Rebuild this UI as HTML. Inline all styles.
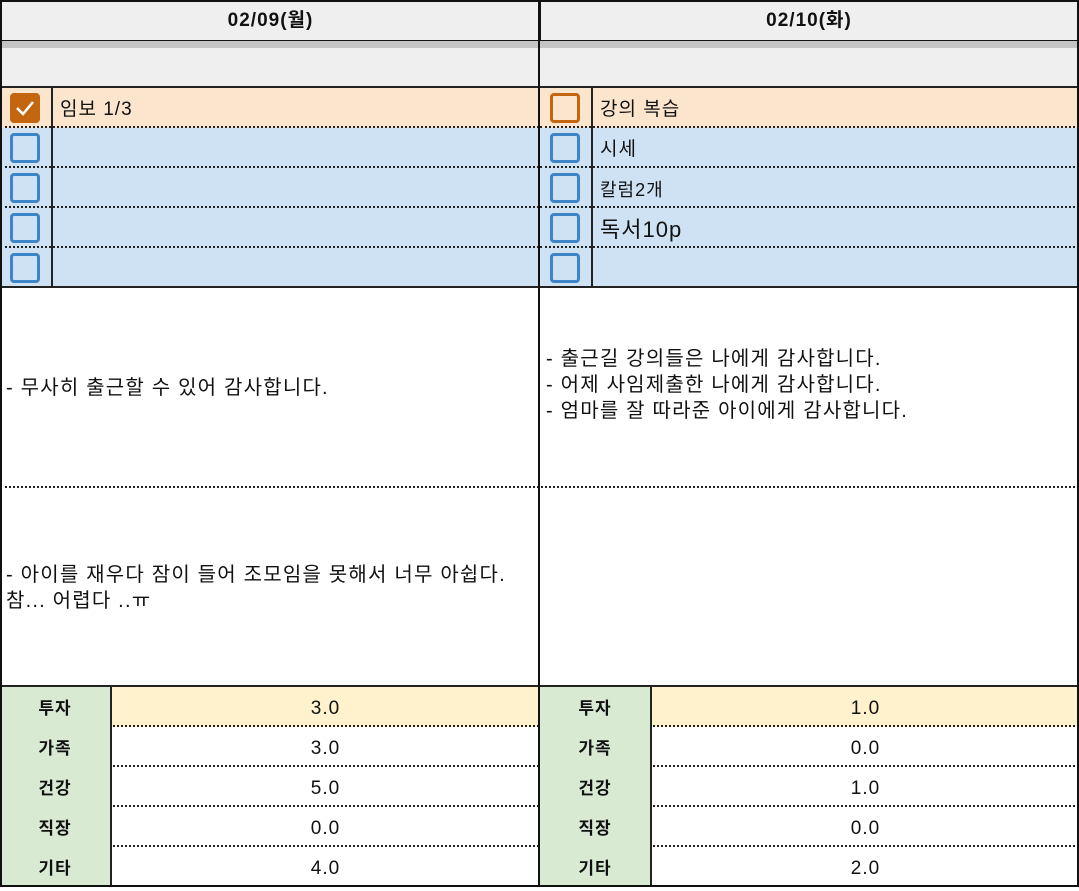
<!DOCTYPE html><html><head><meta charset="utf-8"><style>
*{margin:0;padding:0;box-sizing:border-box}
body{width:1079px;height:887px;background:#fff;position:relative;overflow:hidden;font-family:"Liberation Sans","Noto Sans CJK KR",sans-serif;color:#111}
.a{position:absolute}
.hd{background:#efefef;border:2px solid #111;font-weight:bold;font-size:19px;letter-spacing:1px;text-align:center;line-height:38px}
.t{height:40px;border-bottom:2px dotted #222;}
.cb{position:absolute;left:10px;top:5px;width:30px;height:30px;border:3px solid #3d85c6;border-radius:4px;background:transparent}
.tx{position:absolute;left:60px;top:2px;line-height:40px;font-size:19px;letter-spacing:1px}
.vl{position:absolute;left:51px;top:0;bottom:0;border-left:2px solid #222}
.note{font-size:20px;letter-spacing:1.2px;line-height:26px;padding-left:6px}
.sr{height:40px;border-bottom:2px dotted #222;font-size:19px;letter-spacing:1px;line-height:44px}
.lb{position:absolute;left:0;top:0;width:112px;height:40px;background:#d9ead3;border-right:2px solid #222;text-align:center;font-weight:bold;font-size:17px}
.vv{position:absolute;left:112px;right:0;top:0;text-align:center}
</style></head><body>
<div class="a hd" style="left:0;top:0;width:541px;height:42px">02/09(월)</div>
<div class="a hd" style="left:539px;top:0;width:540px;height:42px">02/10(화)</div>
<div class="a" style="left:0;top:41px;width:1079px;height:7px;background:#c4c4c4"></div>
<div class="a" style="left:0;top:48px;width:1079px;height:40px;background:#efefef;border-bottom:2px solid #222"></div>

<div class="a" style="left:0;top:88px;width:539px;height:200px">
<div class="t" style="background:#fce5cd;position:relative"><div class="cb" style="background:#c4660f;border-color:#c4660f"><svg width="24" height="24" viewBox="0 0 24 24" style="position:absolute;left:0;top:0"><path d="M4 12 L10 18 L20 6" stroke="#fff" stroke-width="2.5" fill="none"/></svg></div><div class="tx">임보 1/3</div></div>
<div class="t" style="background:#cfe2f3;position:relative"><div class="cb"></div></div>
<div class="t" style="background:#cfe2f3;position:relative"><div class="cb"></div></div>
<div class="t" style="background:#cfe2f3;position:relative"><div class="cb"></div></div>
<div class="t" style="background:#cfe2f3;position:relative;border-bottom:2px solid #222"><div class="cb"></div></div>
<div class="vl"></div>
</div>
<div class="a" style="left:540px;top:88px;width:539px;height:200px">
<div class="t" style="background:#fce5cd;position:relative"><div class="cb" style="border-color:#c4660f"></div><div class="tx">강의 복습</div></div>
<div class="t" style="background:#cfe2f3;position:relative"><div class="cb"></div><div class="tx">시세</div></div>
<div class="t" style="background:#cfe2f3;position:relative"><div class="cb"></div><div class="tx" style="font-size:18px">칼럼2개</div></div>
<div class="t" style="background:#cfe2f3;position:relative"><div class="cb"></div><div class="tx" style="font-size:22px">독서10p</div></div>
<div class="t" style="background:#cfe2f3;position:relative;border-bottom:2px solid #222"><div class="cb"></div></div>
<div class="vl"></div>
</div>

<div class="a note" style="left:0;top:375px;width:539px">- 무사히 출근할 수 있어 감사합니다.</div>
<div class="a note" style="left:540px;top:346px;width:539px">- 출근길 강의들은 나에게 감사합니다.<br>- 어제 사임제출한 나에게 감사합니다.<br>- 엄마를 잘 따라준 아이에게 감사합니다.</div>
<div class="a" style="left:0;top:486px;width:1079px;border-top:2px dotted #222"></div>
<div class="a note" style="left:0;top:562px;width:539px">- 아이를 재우다 잠이 들어 조모임을 못해서 너무 아쉽다.<br>참... 어렵다 ..ㅠ</div>
<div class="a" style="left:0;top:685px;width:1079px;border-top:2px solid #222"></div>

<div class="a" style="left:0;top:687px;width:539px">
<div class="sr" style="position:relative;background:#fff2cc"><div class="lb">투자</div><div class="vv">3.0</div></div>
<div class="sr" style="position:relative"><div class="lb">가족</div><div class="vv">3.0</div></div>
<div class="sr" style="position:relative"><div class="lb">건강</div><div class="vv">5.0</div></div>
<div class="sr" style="position:relative"><div class="lb">직장</div><div class="vv">0.0</div></div>
<div class="sr" style="position:relative;border-bottom:none"><div class="lb">기타</div><div class="vv">4.0</div></div>
</div>
<div class="a" style="left:540px;top:687px;width:539px">
<div class="sr" style="position:relative;background:#fff2cc"><div class="lb">투자</div><div class="vv">1.0</div></div>
<div class="sr" style="position:relative"><div class="lb">가족</div><div class="vv">0.0</div></div>
<div class="sr" style="position:relative"><div class="lb">건강</div><div class="vv">1.0</div></div>
<div class="sr" style="position:relative"><div class="lb">직장</div><div class="vv">0.0</div></div>
<div class="sr" style="position:relative;border-bottom:none"><div class="lb">기타</div><div class="vv">2.0</div></div>
</div>

<div class="a" style="left:0;top:0;width:2px;height:887px;background:#111"></div>
<div class="a" style="left:538px;top:0;width:2px;height:887px;background:#111"></div>
<div class="a" style="left:1077px;top:0;width:2px;height:887px;background:#111"></div>
<div class="a" style="left:0;top:885px;width:1079px;height:2px;background:#111"></div>
</body></html>
